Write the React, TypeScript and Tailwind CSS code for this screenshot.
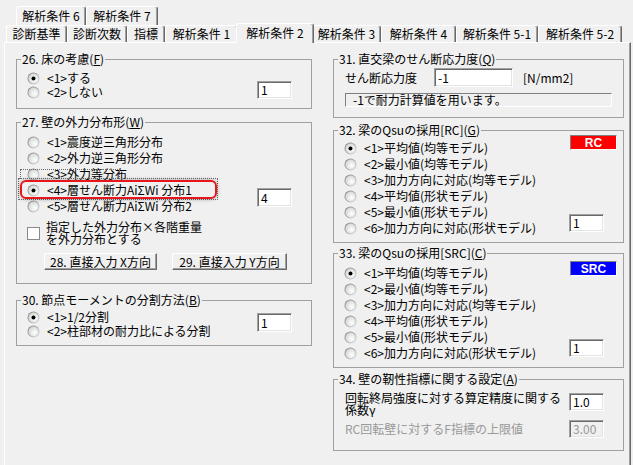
import React from "react";

const tabBase =
  "flex items-center justify-center whitespace-nowrap rounded-t-[3px] border-l border-t border-r border-l-white border-t-white border-r-[#696969] bg-[#f0f0f0] shadow-[inset_-1px_0_0_#a0a0a0]";

const Tab: React.FC<{ className: string; children: React.ReactNode }> = ({ className, children }) => (
  <div className={`${tabBase} ${className}`}>{children}</div>
);

// classic radio bullet
const RadioIcon: React.FC<{ checked?: boolean }> = ({ checked }) => (
  <svg width="13" height="13" viewBox="0 0 13 13" className="shrink-0">
    <defs>
      <linearGradient id="rb-ring" x1="0" y1="0" x2="1" y2="1">
        <stop offset="0" stopColor="#7d7d7d" />
        <stop offset="1" stopColor="#dedede" />
      </linearGradient>
      <radialGradient id="rb-fill" cx="0.62" cy="0.62" r="0.65">
        <stop offset="0" stopColor="#ffffff" />
        <stop offset="1" stopColor="#d6d6d6" />
      </radialGradient>
    </defs>
    <circle cx="6.5" cy="6.5" r="6" fill="url(#rb-ring)" />
    <circle cx="6.5" cy="6.5" r="5" fill="url(#rb-fill)" />
    {checked && <circle cx="6.5" cy="6.5" r="2" fill="#000" />}
  </svg>
);

const Radio: React.FC<{ checked?: boolean; className: string; children: React.ReactNode }> = ({
  checked,
  className,
  children,
}) => (
  <div className={`flex items-center gap-[7px] whitespace-nowrap ${className}`}>
    <RadioIcon checked={checked} />
    <span>{children}</span>
  </div>
);

const TextBox: React.FC<{ value: string; className?: string; disabled?: boolean }> = ({
  value,
  className = "",
  disabled,
}) => (
  <div
    className={`flex shrink-0 items-center border border-t-[#a0a0a0] border-l-[#a0a0a0] border-r-white border-b-white pl-[3px] shadow-[inset_1px_1px_0_#696969,inset_-1px_-1px_0_#e3e3e3] ${
      disabled ? "bg-[#f0f0f0] text-[#999999]" : "bg-white"
    } ${className}`}
  >
    {value}
  </div>
);

const Group: React.FC<{ title: React.ReactNode; className: string; children: React.ReactNode }> = ({
  title,
  className,
  children,
}) => (
  <fieldset className={`border border-[#a0a0a0] ${className}`}>
    <legend className="ml-[4px] px-[1px] leading-[14px]">{title}</legend>
    {children}
  </fieldset>
);

const Badge: React.FC<{ className: string; children: React.ReactNode }> = ({ className, children }) => (
  <div
    className={`flex h-[15px] w-[47px] items-center justify-center border border-t-[#808080] border-l-[#808080] border-r-white border-b-white font-['Liberation_Sans',sans-serif] text-[12px] font-bold text-white ${className}`}
  >
    {children}
  </div>
);

const Button: React.FC<{ className: string; children: React.ReactNode }> = ({ className, children }) => (
  <div
    className={`flex h-[17px] items-center justify-center whitespace-nowrap border border-t-white border-l-white border-r-[#696969] border-b-[#696969] bg-[#f0f0f0] shadow-[inset_-1px_-1px_0_#a0a0a0] ${className}`}
  >
    {children}
  </div>
);

const qsuOptions = [
  "<1>平均値(均等モデル)",
  "<2>最小値(均等モデル)",
  "<3>加力方向に対応(均等モデル)",
  "<4>平均値(形状モデル)",
  "<5>最小値(形状モデル)",
  "<6>加力方向に対応(形状モデル)",
];

const App: React.FC = () => {
  return (
    <div className="h-[465px] w-[633px] overflow-hidden bg-[#f0f0f0] pt-[6px] font-['Noto_Sans_CJK_JP',sans-serif] text-[12px] leading-[14px] text-black">
      {/* back tab row */}
      <div className="ml-[16px] flex h-[19px]">
        <Tab className="h-[19px] w-[70px]">解析条件 6</Tab>
        <Tab className="h-[19px] w-[72px]">解析条件 7</Tab>
      </div>
      {/* front tab row */}
      <div className="ml-[6px] flex h-[17px] items-end">
        <Tab className="h-[17px] w-[61px]">診断基準</Tab>
        <Tab className="h-[17px] w-[60px]">診断次数</Tab>
        <Tab className="h-[17px] w-[38px]">指標</Tab>
        <Tab className="h-[17px] w-[73px]">解析条件 1</Tab>
        <div className="relative z-10 -mx-[2px] mb-[-1px] flex h-[20px] w-[78px] items-center justify-center whitespace-nowrap rounded-t-[3px] border-l border-t border-r border-l-white border-t-white border-r-[#696969] bg-[#f0f0f0] pb-[2px] shadow-[inset_-1px_0_0_#a0a0a0]">
          解析条件 2
        </div>
        <Tab className="h-[17px] w-[69px]">解析条件 3</Tab>
        <Tab className="h-[17px] w-[75px]">解析条件 4</Tab>
        <Tab className="h-[17px] w-[82px]">解析条件 5-1</Tab>
        <Tab className="h-[17px] w-[84px]">解析条件 5-2</Tab>
      </div>

      {/* tab page */}
      <div className="ml-[4px] flex h-[423px] w-[627px] gap-[21px] border-l border-t border-r border-l-white border-t-white border-r-[#696969] pl-[11px] pt-[9px] shadow-[inset_-1px_0_0_#a0a0a0]">
        {/* left column */}
        <div className="flex w-[296px] flex-col">
          <Group title={<>26. 床の考慮(<u>F</u>)</>} className="h-[57px]">
            <div className="flex pl-[10px] pr-[19px] pt-[5px]">
              <div className="flex-1">
                <Radio checked className="h-[14px]">&lt;1&gt;する</Radio>
                <Radio className="h-[14px]">&lt;2&gt;しない</Radio>
              </div>
              <TextBox value="1" className="mt-[10px] h-[18px] w-[35px]" />
            </div>
          </Group>

          <Group title={<>27. 壁の外力分布形(<u>W</u>)</>} className="mt-[6px] h-[169px]">
            <div className="pl-[10px] pr-[19px] pt-[5px]">
              <div className="flex">
                <div className="flex-1">
                  <Radio className="h-[16px]">&lt;1&gt;震度逆三角形分布</Radio>
                  <Radio className="h-[16px]">&lt;2&gt;外力逆三角形分布</Radio>
                  <div className="relative">
                    <span className="absolute -left-[7px] top-[3px] h-[10px] w-[100px] border-l border-r border-t border-dotted border-[#6a6a6a]" />
                    <Radio className="h-[16px]">&lt;3&gt;外力等分布</Radio>
                  </div>
                  <div className="relative">
                    <span className="absolute -left-[9px] -top-[4px] h-[22px] w-[200px] border border-dotted border-[#6a6a6a]" />
                    <span className="absolute -left-[7px] -top-[2px] h-[19px] w-[197px] rounded-[6px] border-2 border-[#e8161b] shadow-[0_0_4px_rgba(0,0,0,0.35)]" />
                    <Radio checked className="h-[16px]">
                      &lt;4&gt;層せん断力AiΣWi 分布1
                    </Radio>
                  </div>
                  <Radio className="h-[16px]">&lt;5&gt;層せん断力AiΣWi 分布2</Radio>
                </div>
                <TextBox value="4" className="mt-[54px] h-[19px] w-[35px]" />
              </div>
              <div className="mt-[7px] flex items-center gap-[6px]">
                <div className="h-[13px] w-[13px] shrink-0 border border-[#8a8a8a] bg-white" />
                <div className="leading-[12px]">
                  指定した外力分布×各階重量
                  <br />
                  を外力分布とする
                </div>
              </div>
              <div className="ml-[17px] mt-[8px] flex gap-[15px]">
                <Button className="w-[113px]">28. 直接入力 X方向</Button>
                <Button className="w-[115px]">29. 直接入力 Y方向</Button>
              </div>
            </div>
          </Group>

          <Group title={<>30. 節点モーメントの分割方法(<u>B</u>)</>} className="mt-[9px] h-[53px]">
            <div className="flex pl-[10px] pr-[19px] pt-[3px]">
              <div className="flex-1">
                <Radio checked className="h-[14px]">&lt;1&gt;1/2分割</Radio>
                <Radio className="h-[14px]">&lt;2&gt;柱部材の耐力比による分割</Radio>
              </div>
              <TextBox value="1" className="mt-[3px] h-[19px] w-[35px]" />
            </div>
          </Group>
        </div>

        {/* right column */}
        <div className="flex w-[291px] flex-col">
          <Group title={<>31. 直交梁のせん断応力度(<u>Q</u>)</>} className="h-[66px]">
            <div className="pl-[11px] pr-[11px] pt-[2px]">
              <div className="flex items-center">
                <span className="w-[89px]">せん断応力度</span>
                <TextBox value="-1" className="h-[19px] w-[79px]" />
                <span className="ml-[10px]">[N/mm2]</span>
              </div>
              <div className="mt-[6px] flex h-[14px] items-center border border-t-[#808080] border-l-[#808080] border-r-white border-b-white pl-[7px]">
                -1で耐力計算値を用います。
              </div>
            </div>
          </Group>

          <Group title={<>32. 梁のQsuの採用[RC](<u>G</u>)</>} className="mt-[5px] h-[120px]">
            <div className="flex pl-[10px] pr-[6px] pt-[3px]">
              <div className="flex-1">
                {qsuOptions.map((o, i) => (
                  <Radio key={o} checked={i === 0} className="h-[16px]">
                    {o}
                  </Radio>
                ))}
              </div>
              <div className="-mt-[5px] flex flex-col items-end">
                <Badge className="bg-[#ff0000]">RC</Badge>
                <TextBox value="1" className="mr-[13px] mt-[64px] h-[18px] w-[35px]" />
              </div>
            </div>
          </Group>

          <Group title={<>33. 梁のQsuの採用[SRC](<u>C</u>)</>} className="mt-[3px] h-[122px]">
            <div className="flex pl-[10px] pr-[6px] pt-[5px]">
              <div className="flex-1">
                {qsuOptions.map((o, i) => (
                  <Radio key={o} checked={i === 0} className="h-[16px]">
                    {o}
                  </Radio>
                ))}
              </div>
              <div className="-mt-[4px] flex flex-col items-end">
                <Badge className="bg-[#0000ff]">SRC</Badge>
                <TextBox value="1" className="mr-[13px] mt-[63px] h-[18px] w-[35px]" />
              </div>
            </div>
          </Group>

          <Group title={<>34. 壁の靭性指標に関する設定(<u>A</u>)</>} className="mt-[4px] h-[79px]">
            <div className="pl-[11px] pr-[19px] pt-[6px]">
              <div className="flex items-start justify-between">
                <div className="leading-[12px]">
                  回転終局強度に対する算定精度に関する
                  <br />
                  係数γ
                </div>
                <TextBox value="1.0" className="mt-[1px] h-[18px] w-[35px]" />
              </div>
              <div className="mt-[4px] flex items-center justify-between">
                <span className="text-[#999999]">RC回転壁に対するF指標の上限値</span>
                <TextBox value="3.00" disabled className="h-[18px] w-[35px]" />
              </div>
            </div>
          </Group>
        </div>
      </div>
    </div>
  );
};

export default App;
